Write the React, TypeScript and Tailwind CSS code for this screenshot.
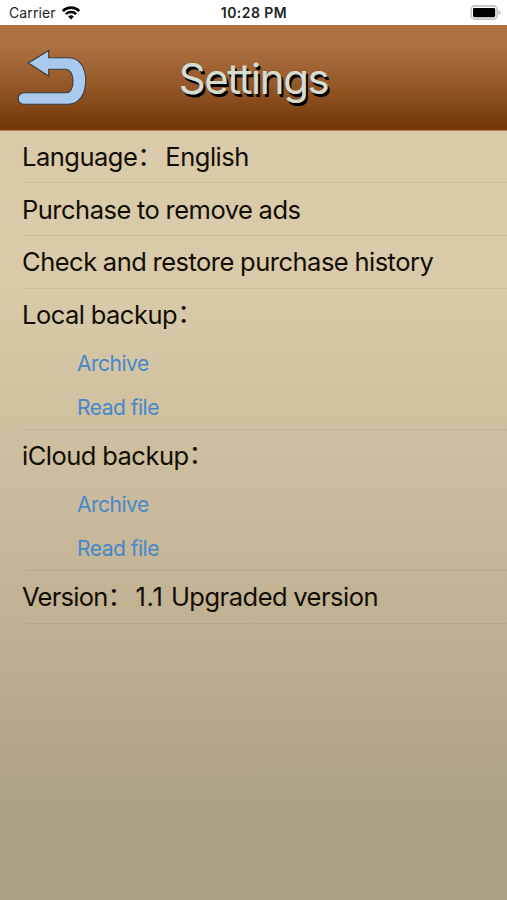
import React from 'react';

const WifiIcon = () => (
  <svg width="18" height="14" viewBox="0 0 18 14" fill="none">
    <path d="M.8 5a11.6 11.6 0 0 1 16.4 0" stroke="#000" strokeWidth="2.6" />
    <path d="M3.8 8.2a7.4 7.4 0 0 1 10.4 0" stroke="#000" strokeWidth="2.4" />
    <path d="M6.1 10.6a4.1 4.1 0 0 1 5.8 0L9 13.6z" fill="#000" />
  </svg>
);

const BatteryIcon = () => (
  <svg width="31" height="15" viewBox="0 0 31 15">
    <rect x="1.1" y="0.9" width="26" height="13.2" rx="3.6" fill="#fff" stroke="#c4c4c4" strokeWidth="1.6" />
    <rect x="3" y="3" width="22.2" height="9.2" rx="1.4" fill="#000" />
    <path d="M28.4 5v5c1.5-.5 2.3-1.5 2.3-2.5s-.8-2-2.3-2.5z" fill="#c4c4c4" />
  </svg>
);

const BackIcon = () => (
  <svg width="70" height="57" viewBox="0 0 70 57">
    <path
      d="M11.3 14 31.7 1.5V8.7H52C62.5 8.7 68.7 18.5 68.7 31.5S62.5 55.3 51 55.3H6.9a5.8 5.8 0 0 1 0-11.6H49.5C53.5 43.7 56 39 56 32S53 20.2 48 20.2H31.7V27z"
      fill="#a9c9ef"
      stroke="#3c3a38"
      strokeWidth="1.1"
    />
  </svg>
);

// full-width colon, sits at the left of its cell
const Colon = () => (
  <span className="inline-block w-[28px] pb-[8px] font-['Noto_Sans_CJK_SC',sans-serif] leading-none tracking-normal">：</span>
);

const labelClass = 'flex items-center whitespace-pre pl-[22px] text-[25.5px] tracking-[-0.5px] [word-spacing:-0.5px] text-[#120d05]';

function Divider() {
  return <div className="ml-[25px] h-px bg-[#8a8068]/20" />;
}

function BackupSection({ title }: { title: string }) {
  return (
    <section>
      <h2 className={`${labelClass} h-[52px]`}>{title}<Colon /></h2>
      <div className="flex h-[88px] flex-col items-start pl-[77px] text-[21px] tracking-[-0.5px] text-[#4688cc]">
        <button className="h-[45px]">Archive</button>
        <button className="h-[43px]">Read file</button>
      </div>
      <Divider />
    </section>
  );
}

export default function App() {
  return (
    <main className="flex h-[900px] w-[507px] flex-col overflow-hidden font-['Inter',sans-serif]">
      {/* Status bar */}
      <div className="grid h-[25px] grid-cols-[1fr_auto_1fr] items-center bg-white pl-[9px] pr-[6px] text-[14px] text-[#222]">
        <div className="flex items-center gap-[6px]">
          <span className="tracking-[0.1px]">Carrier</span>
          <WifiIcon />
        </div>
        <span className="pr-[2px] font-semibold tracking-[0.45px]">10:28 PM</span>
        <div className="flex justify-end"><BatteryIcon /></div>
      </div>

      {/* Header */}
      <header className="grid h-[106px] grid-cols-[1fr_auto_1fr] items-center border-b border-[#b98056] bg-linear-to-b from-[#ae7040] from-20% via-[#965a2a] via-55% to-[#753a08] to-95% px-[17px]">
        <button aria-label="Back" className="justify-self-start"><BackIcon /></button>
        <h1 className="pt-[2px] text-[42px] tracking-[-1.4px] text-[#d5ddd3] [text-shadow:2px_3px_0_#000]">Settings</h1>
      </header>

      {/* Options */}
      <div className="flex-1 bg-linear-to-b from-[#d9cba9] from-20% via-[#bfb092] via-66% to-[#ada283] to-88%">
        <div className={`${labelClass} h-[51px] pt-[2px]`}>Language<Colon />English</div>
        <Divider />
        <div className={`${labelClass} h-[52px] pt-[2px]`}>Purchase to remove ads</div>
        <Divider />
        <div className={`${labelClass} h-[52px] pt-px`}>Check and restore purchase history</div>
        <Divider />
        <BackupSection title="Local backup" />
        <BackupSection title="iCloud backup" />
        <div className={`${labelClass} h-[52px] pt-px`}>
          <span className="tracking-[-0.75px]">Version</span>
          <Colon />
          <span className="tracking-[0.7px]">1.1 </span>
          <span className="tracking-[-0.5px]">Upgraded version</span>
        </div>
        <Divider />
      </div>
    </main>
  );
}
